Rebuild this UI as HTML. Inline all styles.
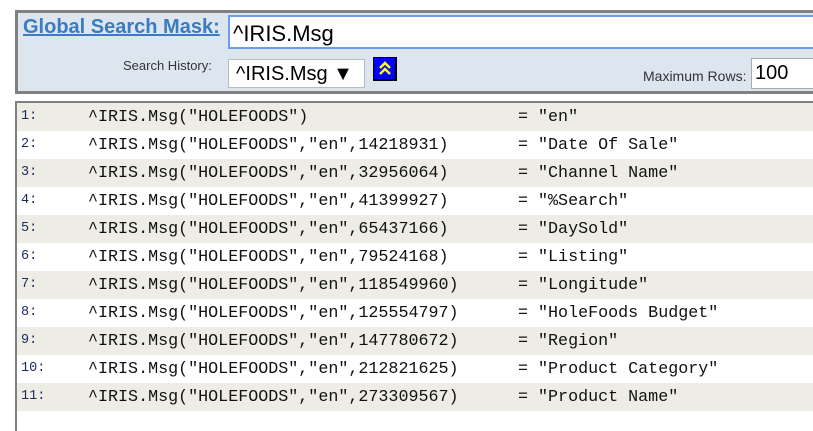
<!DOCTYPE html>
<html><head><meta charset="utf-8"><style>
*{margin:0;padding:0;box-sizing:border-box}
body{width:813px;height:417px;background:#fff;position:relative;overflow:hidden;font-family:"Liberation Sans",Arial,sans-serif}
#hdr{position:absolute;left:15px;top:10px;width:820px;height:84px;background:#dde6ef;border:3px solid #808080}
.a{position:absolute}
#title{left:5px;top:3px;font-size:20px;font-weight:bold;color:#3b7bbf;text-decoration:underline}
#mask{left:210px;top:2px;width:620px;height:34px;background:#fff;border:2px solid #6a9ee8;font-size:22px;padding:4px 3px;color:#000}
#sh{left:105px;top:45px;font-size:13px;color:#333}
#sel{left:210px;top:46px;width:137px;height:29px;background:#fff;border:1px solid #bbb;font-size:20px;padding:3px 7px}
#btn{left:355px;top:44px;width:24px;height:24px;background:#0000ff;border:1px solid #000;border-right-width:2px;border-bottom-width:2px}
#mr{left:625px;top:55px;font-size:14px;color:#333}
#mv{left:733px;top:45px;width:90px;height:31px;background:#fff;border:1px solid #aaa;font-size:20px;padding:3px 3px}
#res{position:absolute;left:15px;top:101px;width:820px;height:330px;border-left:2px solid #808080;border-top:2px solid #808080}
.r{position:absolute;left:0;width:820px;height:28px;font-family:"Liberation Mono",monospace;font-size:16.7px;color:#111}
.r:nth-child(odd){background:#eeede5}
.n{position:absolute;left:4px;top:6px;font-size:13.5px;color:#1a2a5a}
.k{position:absolute;left:71px;top:5px;white-space:pre}
.v{position:absolute;left:501px;top:5px;white-space:pre}
</style></head><body>
<div id="hdr">
<div class="a" id="title">Global Search Mask:</div>
<div class="a" id="mask">^IRIS.Msg</div>
<div class="a" id="sh">Search History:</div>
<div class="a" id="sel">^IRIS.Msg ▼</div>
<div class="a" id="btn"><svg width="22" height="22" viewBox="0 0 22 22"><path d="M6 10l5-5 5 5M6 16l5-5 5 5" stroke="#ff0" stroke-width="2.5" fill="none"/></svg></div>
<div class="a" id="mr">Maximum Rows:</div>
<div class="a" id="mv">100</div>
</div>
<div id="res">
<div class="r" style="top:0"><span class="n">1:</span><span class="k">^IRIS.Msg("HOLEFOODS")</span><span class="v">= "en"</span></div>
<div class="r" style="top:28px"><span class="n">2:</span><span class="k">^IRIS.Msg("HOLEFOODS","en",14218931)</span><span class="v">= "Date Of Sale"</span></div>
<div class="r" style="top:56px"><span class="n">3:</span><span class="k">^IRIS.Msg("HOLEFOODS","en",32956064)</span><span class="v">= "Channel Name"</span></div>
<div class="r" style="top:84px"><span class="n">4:</span><span class="k">^IRIS.Msg("HOLEFOODS","en",41399927)</span><span class="v">= "%Search"</span></div>
<div class="r" style="top:112px"><span class="n">5:</span><span class="k">^IRIS.Msg("HOLEFOODS","en",65437166)</span><span class="v">= "DaySold"</span></div>
<div class="r" style="top:140px"><span class="n">6:</span><span class="k">^IRIS.Msg("HOLEFOODS","en",79524168)</span><span class="v">= "Listing"</span></div>
<div class="r" style="top:168px"><span class="n">7:</span><span class="k">^IRIS.Msg("HOLEFOODS","en",118549960)</span><span class="v">= "Longitude"</span></div>
<div class="r" style="top:196px"><span class="n">8:</span><span class="k">^IRIS.Msg("HOLEFOODS","en",125554797)</span><span class="v">= "HoleFoods Budget"</span></div>
<div class="r" style="top:224px"><span class="n">9:</span><span class="k">^IRIS.Msg("HOLEFOODS","en",147780672)</span><span class="v">= "Region"</span></div>
<div class="r" style="top:252px"><span class="n">10:</span><span class="k">^IRIS.Msg("HOLEFOODS","en",212821625)</span><span class="v">= "Product Category"</span></div>
<div class="r" style="top:280px"><span class="n">11:</span><span class="k">^IRIS.Msg("HOLEFOODS","en",273309567)</span><span class="v">= "Product Name"</span></div>
</div>
</body></html>
